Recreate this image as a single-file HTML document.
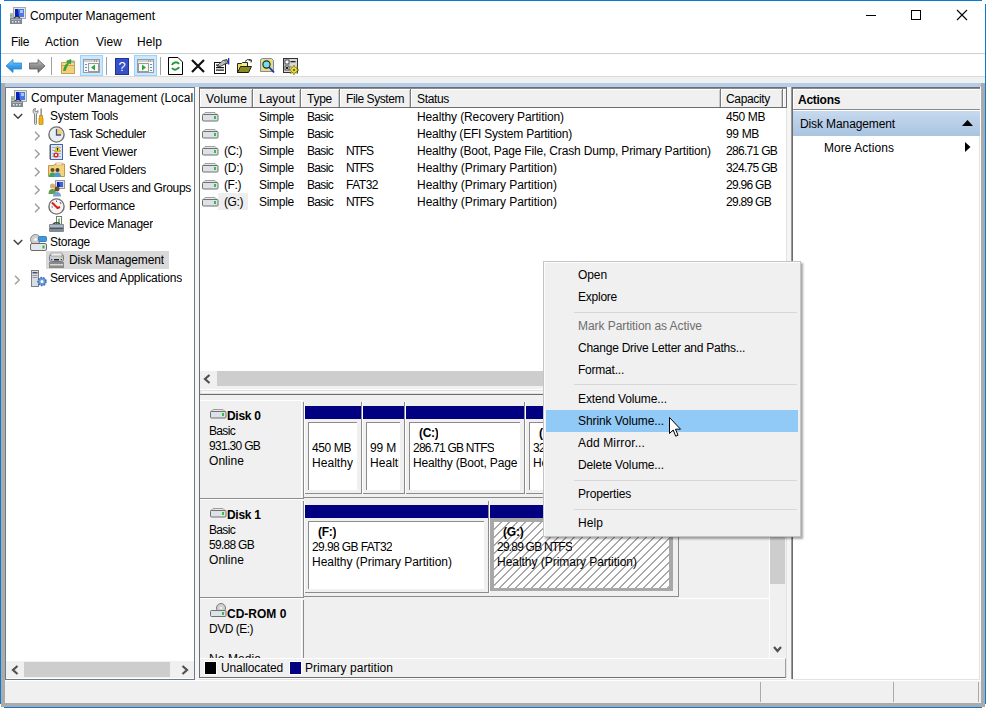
<!DOCTYPE html>
<html><head><meta charset="utf-8"><style>
html,body{margin:0;padding:0;width:986px;height:708px;overflow:hidden;background:#fff}
.a{position:absolute}
.t{position:absolute;font-family:"Liberation Sans",sans-serif;font-size:12px;line-height:16px;color:#000;white-space:nowrap}
.icon{width:16px;height:16px}
</style></head><body>
<div class="a" style="left:0px;top:0px;width:986px;height:708px;background:#fff"></div>
<div class="a" style="left:4px;top:0px;width:978px;height:1px;background:#0a78d5"></div>
<div class="a" style="left:0px;top:4px;width:1px;height:700px;background:#0a78d5"></div>
<div class="a" style="left:985px;top:4px;width:1px;height:700px;background:#0a78d5"></div>
<div class="a" style="left:4px;top:707px;width:978px;height:1px;background:#0a78d5"></div>
<div class="a" style="left:1px;top:83px;width:4px;height:624px;background:#ababab"></div>
<div class="a" style="left:981px;top:83px;width:4px;height:624px;background:#ababab"></div>
<div class="a" style="left:1px;top:703px;width:984px;height:4px;background:#ababab"></div>
<svg class="a" style="left:9px;top:7px" width="17" height="17" viewBox="0 0 17 17">
<rect x="4.5" y="0.5" width="12" height="11" fill="#e4e4e0" stroke="#a8a8a8"/>
<rect x="6" y="2" width="9" height="8" fill="#4a78e8"/><path d="M6 2H9L10 10H6Z" fill="#0a1fb8"/><rect x="11" y="3" width="3" height="3" fill="#a8c4f4"/>
<rect x="1" y="6" width="3" height="6" fill="#b8b8b8"/><rect x="1" y="8" width="2" height="1.5" fill="#5ad04a"/>
<path d="M5 11Q8 8.5 11 11" fill="none" stroke="#333" stroke-width="1.2"/>
<rect x="1" y="11" width="12" height="6" fill="#7c8894"/><rect x="2" y="12" width="10" height="1" fill="#aab4bd"/>
<rect x="3" y="14" width="1.5" height="1.5" fill="#e8e8e8"/><rect x="6" y="14" width="1.5" height="1.5" fill="#e8e8e8"/><rect x="9" y="14" width="1.5" height="1.5" fill="#e8e8e8"/>
</svg>
<div class="t" style="left:30px;top:8px;;letter-spacing:-0.06px;">Computer Management</div>
<div class="a" style="left:866px;top:15px;width:10px;height:1px;background:#000"></div>
<div class="a" style="left:911px;top:10px;width:10px;height:10px;border:1px solid #000;box-sizing:border-box"></div>
<svg class="a" style="left:956px;top:9px" width="12" height="12" viewBox="0 0 12 12"><path d="M1 1L11 11M11 1L1 11" stroke="#000" stroke-width="1.1"/></svg>
<div class="t" style="left:11px;top:34px;;letter-spacing:-0.34px;">File</div>
<div class="t" style="left:45px;top:34px;;letter-spacing:0.11px;">Action</div>
<div class="t" style="left:96px;top:34px;;letter-spacing:0.05px;">View</div>
<div class="t" style="left:137px;top:34px;;letter-spacing:0.08px;">Help</div>
<div class="a" style="left:1px;top:53px;width:984px;height:1px;background:#cfcfcf"></div>
<div class="a" style="left:1px;top:54px;width:984px;height:22px;background:#fff"></div>
<svg class="a" style="left:5px;top:58px" width="18" height="16" viewBox="0 0 18 16">
<defs><linearGradient id="gb" x1="0" y1="0" x2="0" y2="1"><stop offset="0" stop-color="#8cd0ff"/><stop offset="0.5" stop-color="#3aa0ea"/><stop offset="1" stop-color="#1c78c8"/></linearGradient>
<linearGradient id="gg" x1="0" y1="0" x2="0" y2="1"><stop offset="0" stop-color="#c8c8c8"/><stop offset="0.5" stop-color="#8e8e8e"/><stop offset="1" stop-color="#6a6a6a"/></linearGradient></defs>
<path d="M1 8L8 1.5V5H16.5V11H8V14.5Z" fill="url(#gb)" stroke="#2a86d0" stroke-width="0.8" stroke-linejoin="round"/></svg>
<svg class="a" style="left:28px;top:58px" width="18" height="16" viewBox="0 0 18 16">
<path d="M17 8L10 1.5V5H1.5V11H10V14.5Z" fill="url(#gg)" stroke="#5a5a5a" stroke-width="0.8" stroke-linejoin="round"/></svg>
<div class="a" style="left:51px;top:57px;width:1px;height:18px;background:#a0a0a0"></div>
<svg class="a" style="left:60px;top:58px" width="17" height="17" viewBox="0 0 17 17">
<path d="M1.5 4.5H7.5L8.5 3H14.5V15.5H1.5Z" fill="#f5d88a" stroke="#c0a050" stroke-width="0.9"/>
<path d="M1.5 7.5H14.5V15.5H1.5Z" fill="#f2cf78" stroke="#c0a050" stroke-width="0.9"/>
<path d="M3.5 12.5C4 9 6 6 8 4.5L6.5 3L11 1.5L10.5 6L9.2 5C7.5 7 6 9.5 5.5 12.5Z" fill="#30b030" stroke="#1a7a1a" stroke-width="0.5"/>
<rect x="11" y="3.5" width="3" height="1" fill="#5aa0e0"/></svg>
<div class="a" style="left:80px;top:55px;width:23px;height:21px;background:#cce8ff;border:1px solid #99d1ff;box-sizing:border-box"></div>
<svg class="a" style="left:83px;top:59px" width="17" height="14" viewBox="0 0 17 14">
<rect x="0.5" y="0.5" width="16" height="13" fill="#f8f8f8" stroke="#9a9a9a"/><rect x="1" y="1" width="15" height="2" fill="#d0d0d0"/><rect x="11" y="1.5" width="1" height="1" fill="#777"/><rect x="13" y="1.5" width="1" height="1" fill="#777"/>
<rect x="2" y="5" width="2" height="1" fill="#5a8fd0"/><rect x="2" y="8" width="2" height="1" fill="#5a8fd0"/><rect x="2" y="11" width="2" height="1" fill="#5a8fd0"/>
<rect x="5.5" y="4.5" width="10" height="8" fill="none" stroke="#9a9a9a"/><path d="M8 8.5L12 5.5V11.5Z" fill="#2fa63a"/></svg>
<div class="a" style="left:106px;top:57px;width:1px;height:18px;background:#a0a0a0"></div>
<svg class="a" style="left:115px;top:58px" width="14" height="17" viewBox="0 0 14 17">
<rect x="0.5" y="0.5" width="13" height="16" fill="#3651c7" stroke="#23338a"/><text x="7" y="13" font-family="Liberation Sans" font-size="13" fill="#fff" text-anchor="middle">?</text></svg>
<div class="a" style="left:134px;top:55px;width:23px;height:21px;background:#cce8ff;border:1px solid #99d1ff;box-sizing:border-box"></div>
<svg class="a" style="left:137px;top:59px" width="17" height="14" viewBox="0 0 17 14">
<rect x="0.5" y="0.5" width="16" height="13" fill="#f8f8f8" stroke="#9a9a9a"/><rect x="1" y="1" width="15" height="2" fill="#d0d0d0"/><rect x="11" y="1.5" width="1" height="1" fill="#777"/><rect x="13" y="1.5" width="1" height="1" fill="#777"/>
<rect x="13" y="5" width="2" height="1" fill="#5a8fd0"/><rect x="13" y="8" width="2" height="1" fill="#5a8fd0"/><rect x="13" y="11" width="2" height="1" fill="#5a8fd0"/>
<rect x="1.5" y="4.5" width="10" height="8" fill="none" stroke="#9a9a9a"/><path d="M9 8.5L5 5.5V11.5Z" fill="#2fa63a"/></svg>
<div class="a" style="left:160px;top:57px;width:1px;height:18px;background:#a0a0a0"></div>
<svg class="a" style="left:168px;top:57px" width="15" height="18" viewBox="0 0 15 18">
<path d="M0.5 0.5H10L14.5 5V17.5H0.5Z" fill="#fff" stroke="#000"/>
<path d="M4 8A4 4 0 0 1 11 7M11 10A4 4 0 0 1 4 11" fill="none" stroke="#1f9a2e" stroke-width="2"/></svg>
<svg class="a" style="left:190px;top:58px" width="16" height="16" viewBox="0 0 16 16"><path d="M2 2L14 14M14 2L2 14" stroke="#111" stroke-width="2.2"/></svg>
<svg class="a" style="left:213px;top:57px" width="17" height="17" viewBox="0 0 17 17">
<rect x="1.5" y="5.5" width="11" height="11" fill="#fff" stroke="#111"/>
<rect x="3" y="10" width="8" height="1.2" fill="#111"/><rect x="3" y="12.5" width="8" height="1.2" fill="#111"/><rect x="3" y="7.5" width="3" height="1.2" fill="#111"/>
<path d="M4 9L10 3.5L14 2.5L15 6L11 7.5L7 9.5Z" fill="#9a9a9a" stroke="#222" stroke-width="0.8"/>
<path d="M6 8L11 4M7.5 8.5L12 5" stroke="#eee" stroke-width="0.7"/>
<rect x="15" y="1" width="1.3" height="6.5" fill="#1a2fd0"/></svg>
<svg class="a" style="left:236px;top:57px" width="17" height="17" viewBox="0 0 17 17">
<path d="M1.5 6.5H5.5L6.5 5.5H11.5V15.5H1.5Z" fill="#f2f08a" stroke="#111" stroke-width="0.9"/>
<path d="M2 8H6M2 10H4" stroke="#d8d040" stroke-width="1"/>
<path d="M1.5 15.5L4.5 9.5H15.5L12.5 15.5Z" fill="#8e8a22" stroke="#111" stroke-width="0.9"/>
<path d="M9 4.5Q11.5 1 14.5 3.5" fill="none" stroke="#222" stroke-width="1"/><path d="M13 2.5L15.5 3L15 5.5" fill="none" stroke="#222" stroke-width="1"/></svg>
<svg class="a" style="left:259px;top:57px" width="17" height="18" viewBox="0 0 17 18">
<path d="M1.5 3.5Q1.5 1.5 3.5 1.5H12.5L14.5 3.5V14.5H1.5Z" fill="#d8d8b0" stroke="#8a8a8a"/>
<rect x="3" y="3" width="10" height="10" fill="#e8e070"/>
<circle cx="7.5" cy="7.5" r="3.6" fill="#70e0f0" stroke="#222" stroke-width="1.1"/>
<path d="M10 10L15 15.5" stroke="#1a2fc0" stroke-width="1.8"/></svg>
<svg class="a" style="left:282px;top:57px" width="18" height="18" viewBox="0 0 18 18">
<rect x="1.5" y="1.5" width="14" height="14" fill="#d8d8d8" stroke="#333"/>
<rect x="3" y="3" width="4" height="4" fill="#fff" stroke="#222" stroke-width="0.8"/><rect x="8.5" y="4" width="5" height="1.3" fill="#222"/>
<rect x="3" y="9" width="4" height="4" fill="#fff" stroke="#222" stroke-width="0.8"/><rect x="4" y="10" width="2" height="2" fill="#222"/>
<path d="M12 8L13 10.5L15.5 9.5L14.5 12L17 13L14.5 14L15.5 16.5L13 15.5L12 18L11 15.5L8.5 16.5L9.5 14L7 13L9.5 12L8.5 9.5L11 10.5Z" fill="#f2ea2a" stroke="#6a6a00" stroke-width="0.6"/>
<circle cx="12" cy="13" r="1.3" fill="#666"/></svg>
<div class="a" style="left:1px;top:76px;width:984px;height:1px;background:#dadada"></div>
<div class="a" style="left:1px;top:77px;width:984px;height:6px;background:#f0f0f0"></div>
<div class="a" style="left:5px;top:83px;width:976px;height:4px;background:#b5cde6"></div>
<div class="a" style="left:5px;top:87px;width:190px;height:593px;background:#fff;border:1px solid #6f7a89;box-sizing:border-box"></div>
<div class="a" style="left:195px;top:87px;width:4px;height:593px;background:#f5f5f5"></div>
<div class="a" style="left:46px;top:251px;width:123px;height:18px;background:#d9d9d9"></div>
<div class="t" style="left:31px;top:90px;white-space:nowrap;overflow:hidden;max-width:162px;letter-spacing:0px;">Computer Management (Local)</div>
<svg class="a" style="left:10px;top:90px" width="17" height="17" viewBox="0 0 17 17">
<rect x="4.5" y="0.5" width="12" height="11" fill="#e4e4e0" stroke="#a8a8a8"/>
<rect x="6" y="2" width="9" height="8" fill="#4a78e8"/><path d="M6 2H9L10 10H6Z" fill="#0a1fb8"/><rect x="11" y="3" width="3" height="3" fill="#a8c4f4"/>
<rect x="1" y="6" width="3" height="6" fill="#b8b8b8"/><rect x="1" y="8" width="2" height="1.5" fill="#5ad04a"/>
<path d="M5 11Q8 8.5 11 11" fill="none" stroke="#333" stroke-width="1.2"/>
<rect x="1" y="11" width="12" height="6" fill="#7c8894"/><rect x="2" y="12" width="10" height="1" fill="#aab4bd"/>
<rect x="3" y="14" width="1.5" height="1.5" fill="#e8e8e8"/><rect x="6" y="14" width="1.5" height="1.5" fill="#e8e8e8"/><rect x="9" y="14" width="1.5" height="1.5" fill="#e8e8e8"/>
</svg>
<div class="t" style="left:50px;top:108px;white-space:nowrap;overflow:hidden;max-width:143px;letter-spacing:-0.26px;">System Tools</div>
<svg class="a" style="left:13px;top:113px" width="10" height="7" viewBox="0 0 10 7"><path d="M0.8 1L5 5.2L9.2 1" fill="none" stroke="#404040" stroke-width="1.5"/></svg>
<svg class="a" style="left:31px;top:108px" width="16" height="17" viewBox="0 0 16 17">
<path d="M2 3Q2 0.5 4.5 0.5L3.8 3L5 4L7 2.5Q7.5 5 5.5 6L5.5 15.5Q5.5 16.5 4.5 16.5Q3.5 16.5 3.5 15.5L3.5 6Q2 5 2 3Z" fill="#dcdcdc" stroke="#7a7a7a" stroke-width="0.9"/>
<rect x="9.6" y="0.5" width="1" height="7" fill="#555"/>
<path d="M8.5 7.5H11.5V9.5L12 10V16Q12 16.8 11 16.8H9Q8 16.8 8 16V10L8.5 9.5Z" fill="#f2b211" stroke="#b07a00" stroke-width="0.7"/>
</svg>
<div class="t" style="left:69px;top:126px;white-space:nowrap;overflow:hidden;max-width:124px;letter-spacing:-0.36px;">Task Scheduler</div>
<svg class="a" style="left:34px;top:131px" width="7" height="10" viewBox="0 0 7 10"><path d="M1 0.8L5.2 5L1 9.2" fill="none" stroke="#a0a0a0" stroke-width="1.5"/></svg>
<svg class="a" style="left:48px;top:126px" width="17" height="17" viewBox="0 0 17 17">
<circle cx="8.5" cy="8.5" r="7.6" fill="#e9eef4" stroke="#707070" stroke-width="1.4"/>
<path d="M8.5 2.2A6.3 6.3 0 0 1 14.8 8.5H8.5Z" fill="#f5cf78"/>
<path d="M8.5 3V9H13" fill="none" stroke="#3a5680" stroke-width="1.3"/>
</svg>
<div class="t" style="left:69px;top:144px;white-space:nowrap;overflow:hidden;max-width:124px;letter-spacing:-0.21px;">Event Viewer</div>
<svg class="a" style="left:34px;top:149px" width="7" height="10" viewBox="0 0 7 10"><path d="M1 0.8L5.2 5L1 9.2" fill="none" stroke="#a0a0a0" stroke-width="1.5"/></svg>
<svg class="a" style="left:48px;top:144px" width="16" height="17" viewBox="0 0 16 17">
<rect x="2.5" y="0.5" width="12" height="15" fill="#dbe6f5" stroke="#4a62a8"/>
<rect x="4" y="3" width="9" height="1" fill="#9fb4d8"/><rect x="4" y="6" width="9" height="1" fill="#9fb4d8"/><rect x="4" y="9" width="9" height="1" fill="#9fb4d8"/><rect x="4" y="12" width="9" height="1" fill="#9fb4d8"/>
<path d="M1 2H3M1 4H3M1 6H3M1 8H3M1 10H3M1 12H3M1 14H3" stroke="#555" stroke-width="1"/>
<path d="M9.5 2L12.5 7.5H6.5Z" fill="#f2d21b" stroke="#b89a00" stroke-width="0.6"/><rect x="9.1" y="4" width="0.9" height="2.5" fill="#000"/>
<circle cx="8" cy="11" r="2.6" fill="#d92a2a"/><path d="M7 10L9 12M9 10L7 12" stroke="#fff" stroke-width="0.9"/>
</svg>
<div class="t" style="left:69px;top:162px;white-space:nowrap;overflow:hidden;max-width:124px;letter-spacing:-0.36px;">Shared Folders</div>
<svg class="a" style="left:34px;top:167px" width="7" height="10" viewBox="0 0 7 10"><path d="M1 0.8L5.2 5L1 9.2" fill="none" stroke="#a0a0a0" stroke-width="1.5"/></svg>
<svg class="a" style="left:48px;top:162px" width="17" height="16" viewBox="0 0 17 16">
<path d="M0.5 3.5H6L7 2H16.5V14.5H0.5Z" fill="#f5d27e" stroke="#c09a48"/>
<rect x="8" y="1" width="6" height="2" fill="#fff" stroke="#c09a48" stroke-width="0.6"/>
<circle cx="4.5" cy="8" r="2" fill="#6b4a2a"/><path d="M1 15Q1 10.5 4.5 10.5Q8 10.5 8 15Z" fill="#3aa36a"/>
<circle cx="9.5" cy="8" r="2" fill="#4a3a2a"/><path d="M6 15Q6 10.5 9.5 10.5Q13 10.5 13 15Z" fill="#4f9ad6"/>
</svg>
<div class="t" style="left:69px;top:180px;white-space:nowrap;overflow:hidden;max-width:124px;letter-spacing:-0.34px;">Local Users and Groups</div>
<svg class="a" style="left:34px;top:185px" width="7" height="10" viewBox="0 0 7 10"><path d="M1 0.8L5.2 5L1 9.2" fill="none" stroke="#a0a0a0" stroke-width="1.5"/></svg>
<svg class="a" style="left:48px;top:180px" width="17" height="17" viewBox="0 0 17 17">
<rect x="7.5" y="0.5" width="9" height="8" fill="#dcdcdc" stroke="#999"/><rect x="9" y="2" width="6" height="5" fill="#3a62d8"/><path d="M9 2H11L12 7H9Z" fill="#0a1fb8"/>
<circle cx="4.5" cy="6" r="2.6" fill="#d9b070"/><path d="M0.5 14Q0.5 9 4.5 9Q8 9 8 14Z" fill="#5aa04a"/>
<circle cx="9" cy="9" r="2.5" fill="#6b4a2a"/><path d="M5 16.5Q5 12 9 12Q13 12 13 16.5Z" fill="#7aa2d0"/>
</svg>
<div class="t" style="left:69px;top:198px;white-space:nowrap;overflow:hidden;max-width:124px;letter-spacing:-0.24px;">Performance</div>
<svg class="a" style="left:34px;top:203px" width="7" height="10" viewBox="0 0 7 10"><path d="M1 0.8L5.2 5L1 9.2" fill="none" stroke="#a0a0a0" stroke-width="1.5"/></svg>
<svg class="a" style="left:48px;top:198px" width="17" height="17" viewBox="0 0 17 17">
<circle cx="8.5" cy="8.5" r="7.6" fill="#f4f4f4" stroke="#707070" stroke-width="1.4"/>
<path d="M4 4.5L9.5 10L12 9" fill="none" stroke="#e01b1b" stroke-width="2"/>
<path d="M12 4L13 6M3.5 9H5M8.5 2.5V4" stroke="#666" stroke-width="1"/>
</svg>
<div class="t" style="left:69px;top:216px;white-space:nowrap;overflow:hidden;max-width:124px;letter-spacing:-0.24px;">Device Manager</div>
<svg class="a" style="left:48px;top:216px" width="17" height="17" viewBox="0 0 17 17">
<rect x="8.5" y="0.5" width="5" height="8" fill="#fff" stroke="#777"/><path d="M11 2.5V7" stroke="#3cb43c" stroke-width="1.5"/>
<path d="M5 8Q8.5 5.5 12 8" fill="none" stroke="#444" stroke-width="1.4"/>
<rect x="1" y="8" width="15" height="8" rx="1" fill="#7f8a95"/><rect x="2" y="9" width="13" height="2" fill="#aeb8c1"/><rect x="2" y="12" width="13" height="1" fill="#4c5660"/>
</svg>
<div class="t" style="left:50px;top:234px;white-space:nowrap;overflow:hidden;max-width:143px;letter-spacing:-0.29px;">Storage</div>
<svg class="a" style="left:13px;top:239px" width="10" height="7" viewBox="0 0 10 7"><path d="M0.8 1L5 5.2L9.2 1" fill="none" stroke="#404040" stroke-width="1.5"/></svg>
<svg class="a" style="left:30px;top:234px" width="17" height="17" viewBox="0 0 17 17">
<circle cx="5.5" cy="5.5" r="5" fill="#cfcfcf" stroke="#8a8a8a"/><circle cx="5.5" cy="5.5" r="1.3" fill="#fff"/>
<rect x="8.5" y="2.5" width="8" height="5" rx="1" fill="#3f97df" stroke="#2a6db0" stroke-width="0.8"/>
<rect x="0.5" y="9.5" width="16" height="7" rx="1.5" fill="#e3e6ec" stroke="#6a6a6a"/><rect x="12.5" y="11.5" width="2" height="3" fill="#33b23a"/>
</svg>
<div class="t" style="left:69px;top:252px;white-space:nowrap;overflow:hidden;max-width:124px;letter-spacing:-0.11px;">Disk Management</div>
<svg class="a" style="left:48px;top:252px" width="17" height="17" viewBox="0 0 17 17">
<rect x="1.5" y="2.5" width="14" height="7" rx="2" fill="#cfcfcf" stroke="#777"/><rect x="3" y="1" width="11" height="3" fill="#eee" stroke="#888" stroke-width="0.6"/>
<rect x="6" y="7" width="5" height="1.5" fill="#222"/><rect x="3" y="7" width="1.3" height="1.3" fill="#1a3fd0"/><rect x="12.7" y="7" width="1.3" height="1.3" fill="#1a3fd0"/><rect x="13" y="4" width="1.5" height="1.5" fill="#7ac23a"/>
<rect x="1" y="10" width="15" height="6" fill="#8a8a8a"/><rect x="2" y="12" width="13" height="1.5" fill="#d8d8d8"/>
</svg>
<div class="t" style="left:50px;top:270px;white-space:nowrap;overflow:hidden;max-width:143px;letter-spacing:-0.19px;">Services and Applications</div>
<svg class="a" style="left:14px;top:275px" width="7" height="10" viewBox="0 0 7 10"><path d="M1 0.8L5.2 5L1 9.2" fill="none" stroke="#a0a0a0" stroke-width="1.5"/></svg>
<svg class="a" style="left:30px;top:270px" width="17" height="17" viewBox="0 0 17 17">
<rect x="1.5" y="0.5" width="7" height="16" fill="#d8dde3" stroke="#7a8088"/><rect x="2.5" y="2" width="5" height="1.5" fill="#4a4f7a"/><rect x="2.5" y="5" width="5" height="1" fill="#999"/><rect x="2.5" y="7" width="5" height="1" fill="#999"/>
<circle cx="12" cy="11.5" r="4" fill="#6a9ad8" stroke="#3a6ab0" stroke-width="1.6" stroke-dasharray="1.6 1.2"/><circle cx="12" cy="11.5" r="1.5" fill="#fff"/>
</svg>
<div class="a" style="left:6px;top:661px;width:188px;height:17px;background:#f0f0f0"></div>
<div class="a" style="left:24px;top:662px;width:146px;height:15px;background:#cdcdcd"></div>
<svg class="a" style="left:11px;top:665px" width="8" height="10" viewBox="0 0 8 10"><path d="M6.5 1L2 5L6.5 9" fill="none" stroke="#505050" stroke-width="2.2"/></svg>
<svg class="a" style="left:181px;top:665px" width="8" height="10" viewBox="0 0 8 10"><path d="M1.5 1L6 5L1.5 9" fill="none" stroke="#505050" stroke-width="2.2"/></svg>
<div class="a" style="left:199px;top:87px;width:588px;height:593px;background:#fff"></div>
<div class="a" style="left:199px;top:87px;width:1px;height:592px;background:#6d6d6d"></div>
<div class="a" style="left:199px;top:87px;width:588px;height:1px;background:#6d6d6d"></div>
<div class="a" style="left:786px;top:89px;width:1px;height:590px;background:#e3e3e3"></div>
<div class="a" style="left:199px;top:678px;width:588px;height:1px;background:#fff"></div>
<div class="a" style="left:199px;top:679px;width:588px;height:1px;background:#e3e3e3"></div>
<div class="a" style="left:200px;top:88px;width:586px;height:1px;background:#8a8a8a"></div>
<div class="a" style="left:200px;top:89px;width:586px;height:18px;background:#f0f0f0;border-top:1px solid #fff;border-left:1px solid #fff;box-sizing:border-box"></div>
<div class="a" style="left:200px;top:107px;width:586px;height:1px;background:#6d6d6d"></div>
<div class="a" style="left:251px;top:90px;width:1px;height:17px;background:#c8c8c8"></div>
<div class="a" style="left:252px;top:89px;width:1px;height:18px;background:#7a7a7a"></div>
<div class="a" style="left:253px;top:89px;width:1px;height:18px;background:#fff"></div>
<div class="a" style="left:299px;top:90px;width:1px;height:17px;background:#c8c8c8"></div>
<div class="a" style="left:300px;top:89px;width:1px;height:18px;background:#7a7a7a"></div>
<div class="a" style="left:301px;top:89px;width:1px;height:18px;background:#fff"></div>
<div class="a" style="left:338px;top:90px;width:1px;height:17px;background:#c8c8c8"></div>
<div class="a" style="left:339px;top:89px;width:1px;height:18px;background:#7a7a7a"></div>
<div class="a" style="left:340px;top:89px;width:1px;height:18px;background:#fff"></div>
<div class="a" style="left:409px;top:90px;width:1px;height:17px;background:#c8c8c8"></div>
<div class="a" style="left:410px;top:89px;width:1px;height:18px;background:#7a7a7a"></div>
<div class="a" style="left:411px;top:89px;width:1px;height:18px;background:#fff"></div>
<div class="a" style="left:719px;top:90px;width:1px;height:17px;background:#c8c8c8"></div>
<div class="a" style="left:720px;top:89px;width:1px;height:18px;background:#7a7a7a"></div>
<div class="a" style="left:721px;top:89px;width:1px;height:18px;background:#fff"></div>
<div class="a" style="left:781px;top:90px;width:1px;height:17px;background:#c8c8c8"></div>
<div class="a" style="left:782px;top:89px;width:1px;height:18px;background:#7a7a7a"></div>
<div class="a" style="left:783px;top:89px;width:1px;height:18px;background:#fff"></div>
<div class="a" style="left:786px;top:87px;width:1px;height:21px;background:#6d6d6d"></div>
<div class="a" style="left:218px;top:193px;width:30px;height:17px;background:#eeeeee"></div>
<div class="t" style="left:206px;top:91px;;letter-spacing:0.16px;">Volume</div>
<div class="t" style="left:259px;top:91px;">Layout</div>
<div class="t" style="left:307px;top:91px;;letter-spacing:-0.25px;">Type</div>
<div class="t" style="left:346px;top:91px;;letter-spacing:-0.42px;">File System</div>
<div class="t" style="left:417px;top:91px;;letter-spacing:-0.33px;">Status</div>
<div class="t" style="left:726px;top:91px;;letter-spacing:-0.34px;">Capacity</div>
<svg class="a" style="left:202px;top:111px" width="17" height="11" viewBox="0 0 17 11"><path d="M3 1.5H13L15.5 4H0.5Z" fill="#e6e6e6" stroke="#8a8a8a" stroke-width="0.8"/><rect x="0.5" y="3.5" width="15.5" height="6.5" rx="1" fill="#dde1e8" stroke="#707070"/><rect x="12" y="5" width="2" height="3" fill="#2fc23a"/></svg>
<div class="t" style="left:259px;top:109px;;letter-spacing:-0.28px;">Simple</div>
<div class="t" style="left:307px;top:109px;;letter-spacing:-0.67px;">Basic</div>
<div class="t" style="left:346px;top:109px;"></div>
<div class="t" style="left:417px;top:109px;;letter-spacing:-0.11px;">Healthy (Recovery Partition)</div>
<div class="t" style="left:726px;top:109px;;letter-spacing:-0.39px;">450 MB</div>
<svg class="a" style="left:202px;top:128px" width="17" height="11" viewBox="0 0 17 11"><path d="M3 1.5H13L15.5 4H0.5Z" fill="#e6e6e6" stroke="#8a8a8a" stroke-width="0.8"/><rect x="0.5" y="3.5" width="15.5" height="6.5" rx="1" fill="#dde1e8" stroke="#707070"/><rect x="12" y="5" width="2" height="3" fill="#2fc23a"/></svg>
<div class="t" style="left:259px;top:126px;;letter-spacing:-0.28px;">Simple</div>
<div class="t" style="left:307px;top:126px;;letter-spacing:-0.67px;">Basic</div>
<div class="t" style="left:346px;top:126px;"></div>
<div class="t" style="left:417px;top:126px;;letter-spacing:-0.21px;">Healthy (EFI System Partition)</div>
<div class="t" style="left:726px;top:126px;;letter-spacing:-0.33px;">99 MB</div>
<svg class="a" style="left:202px;top:145px" width="17" height="11" viewBox="0 0 17 11"><path d="M3 1.5H13L15.5 4H0.5Z" fill="#e6e6e6" stroke="#8a8a8a" stroke-width="0.8"/><rect x="0.5" y="3.5" width="15.5" height="6.5" rx="1" fill="#dde1e8" stroke="#707070"/><rect x="12" y="5" width="2" height="3" fill="#2fc23a"/></svg>
<div class="t" style="left:224px;top:143px;;letter-spacing:-0.50px;">(C:)</div>
<div class="t" style="left:259px;top:143px;;letter-spacing:-0.28px;">Simple</div>
<div class="t" style="left:307px;top:143px;;letter-spacing:-0.67px;">Basic</div>
<div class="t" style="left:346px;top:143px;;letter-spacing:-1.08px;">NTFS</div>
<div class="t" style="left:417px;top:143px;;letter-spacing:-0.17px;">Healthy (Boot, Page File, Crash Dump, Primary Partition)</div>
<div class="t" style="left:726px;top:143px;;letter-spacing:-0.70px;">286.71 GB</div>
<svg class="a" style="left:202px;top:162px" width="17" height="11" viewBox="0 0 17 11"><path d="M3 1.5H13L15.5 4H0.5Z" fill="#e6e6e6" stroke="#8a8a8a" stroke-width="0.8"/><rect x="0.5" y="3.5" width="15.5" height="6.5" rx="1" fill="#dde1e8" stroke="#707070"/><rect x="12" y="5" width="2" height="3" fill="#2fc23a"/></svg>
<div class="t" style="left:224px;top:160px;;letter-spacing:-0.25px;">(D:)</div>
<div class="t" style="left:259px;top:160px;;letter-spacing:-0.28px;">Simple</div>
<div class="t" style="left:307px;top:160px;;letter-spacing:-0.67px;">Basic</div>
<div class="t" style="left:346px;top:160px;;letter-spacing:-1.08px;">NTFS</div>
<div class="t" style="left:417px;top:160px;;letter-spacing:-0.03px;">Healthy (Primary Partition)</div>
<div class="t" style="left:726px;top:160px;;letter-spacing:-0.70px;">324.75 GB</div>
<svg class="a" style="left:202px;top:179px" width="17" height="11" viewBox="0 0 17 11"><path d="M3 1.5H13L15.5 4H0.5Z" fill="#e6e6e6" stroke="#8a8a8a" stroke-width="0.8"/><rect x="0.5" y="3.5" width="15.5" height="6.5" rx="1" fill="#dde1e8" stroke="#707070"/><rect x="12" y="5" width="2" height="3" fill="#2fc23a"/></svg>
<div class="t" style="left:224px;top:177px;;letter-spacing:-0.41px;">(F:)</div>
<div class="t" style="left:259px;top:177px;;letter-spacing:-0.28px;">Simple</div>
<div class="t" style="left:307px;top:177px;;letter-spacing:-0.67px;">Basic</div>
<div class="t" style="left:346px;top:177px;;letter-spacing:-0.49px;">FAT32</div>
<div class="t" style="left:417px;top:177px;;letter-spacing:-0.03px;">Healthy (Primary Partition)</div>
<div class="t" style="left:726px;top:177px;;letter-spacing:-0.71px;">29.96 GB</div>
<svg class="a" style="left:202px;top:196px" width="17" height="11" viewBox="0 0 17 11"><path d="M3 1.5H13L15.5 4H0.5Z" fill="#e6e6e6" stroke="#8a8a8a" stroke-width="0.8"/><rect x="0.5" y="3.5" width="15.5" height="6.5" rx="1" fill="#dde1e8" stroke="#707070"/><rect x="12" y="5" width="2" height="3" fill="#2fc23a"/></svg>
<div class="t" style="left:224px;top:194px;;letter-spacing:-0.41px;">(G:)</div>
<div class="t" style="left:259px;top:194px;;letter-spacing:-0.28px;">Simple</div>
<div class="t" style="left:307px;top:194px;;letter-spacing:-0.67px;">Basic</div>
<div class="t" style="left:346px;top:194px;;letter-spacing:-1.08px;">NTFS</div>
<div class="t" style="left:417px;top:194px;;letter-spacing:-0.03px;">Healthy (Primary Partition)</div>
<div class="t" style="left:726px;top:194px;;letter-spacing:-0.71px;">29.89 GB</div>
<div class="a" style="left:200px;top:371px;width:586px;height:18px;background:#f0f0f0"></div>
<div class="a" style="left:217px;top:371px;width:569px;height:15px;background:#cdcdcd"></div>
<svg class="a" style="left:203px;top:374px" width="8" height="10" viewBox="0 0 8 10"><path d="M6.5 1L2 5L6.5 9" fill="none" stroke="#505050" stroke-width="2.2"/></svg>
<div class="a" style="left:200px;top:390px;width:586px;height:4px;background:#f7f7f7;border:1px solid #e0e0e0;box-sizing:border-box"></div>
<div class="a" style="left:200px;top:394px;width:586px;height:1px;background:#6d6d6d"></div>
<div class="a" style="left:200px;top:395px;width:586px;height:264px;background:#f0f0f0"></div>
<div class="a" style="left:200px;top:400px;width:103px;height:99px;background:#f0f0f0;border-top:1px solid #fff;border-bottom:1px solid #8c8c8c;box-sizing:border-box"></div>
<div class="a" style="left:301px;top:401px;width:1px;height:97px;background:#fff"></div>
<div class="a" style="left:303px;top:402px;width:1px;height:97px;background:#8c8c8c"></div>
<svg class="a" style="left:210px;top:408px" width="17" height="11" viewBox="0 0 17 11"><path d="M3 1.5H13L15.5 4H0.5Z" fill="#e6e6e6" stroke="#8a8a8a" stroke-width="0.8"/><rect x="0.5" y="3.5" width="15.5" height="6.5" rx="1" fill="#dde1e8" stroke="#707070"/><rect x="12" y="5" width="2" height="3" fill="#2fc23a"/></svg>
<div class="t" style="left:227px;top:408px;font-weight:bold;letter-spacing:-0.31px;">Disk 0</div>
<div class="t" style="left:209px;top:423px;;letter-spacing:-0.67px;">Basic</div>
<div class="t" style="left:209px;top:438px;;letter-spacing:-0.70px;">931.30 GB</div>
<div class="t" style="left:209px;top:453px;;letter-spacing:0.05px;">Online</div>
<div class="a" style="left:200px;top:499px;width:103px;height:99px;background:#f0f0f0;border-top:1px solid #fff;border-bottom:1px solid #8c8c8c;box-sizing:border-box"></div>
<div class="a" style="left:301px;top:500px;width:1px;height:97px;background:#fff"></div>
<div class="a" style="left:303px;top:501px;width:1px;height:97px;background:#8c8c8c"></div>
<svg class="a" style="left:210px;top:507px" width="17" height="11" viewBox="0 0 17 11"><path d="M3 1.5H13L15.5 4H0.5Z" fill="#e6e6e6" stroke="#8a8a8a" stroke-width="0.8"/><rect x="0.5" y="3.5" width="15.5" height="6.5" rx="1" fill="#dde1e8" stroke="#707070"/><rect x="12" y="5" width="2" height="3" fill="#2fc23a"/></svg>
<div class="t" style="left:227px;top:507px;font-weight:bold;letter-spacing:-0.31px;">Disk 1</div>
<div class="t" style="left:209px;top:522px;;letter-spacing:-0.67px;">Basic</div>
<div class="t" style="left:209px;top:537px;;letter-spacing:-0.71px;">59.88 GB</div>
<div class="t" style="left:209px;top:552px;;letter-spacing:0.05px;">Online</div>
<div class="a" style="left:200px;top:598px;width:103px;height:61px;background:#f0f0f0;border-top:1px solid #fff;border-bottom:1px solid #8c8c8c;box-sizing:border-box"></div>
<div class="a" style="left:301px;top:599px;width:1px;height:59px;background:#fff"></div>
<div class="a" style="left:303px;top:600px;width:1px;height:59px;background:#8c8c8c"></div>
<svg class="a" style="left:210px;top:603px" width="17" height="14" viewBox="0 0 17 14"><circle cx="11" cy="5" r="4.5" fill="#d0d0d0" stroke="#7a7a7a"/><circle cx="11" cy="5" r="1" fill="#fff"/><rect x="0.5" y="7.5" width="15.5" height="6" rx="1" fill="#dde1e8" stroke="#707070"/><rect x="12" y="9" width="2" height="3" fill="#2fc23a"/></svg>
<div class="t" style="left:227px;top:606px;font-weight:bold">CD-ROM 0</div>
<div class="t" style="left:209px;top:621px;;letter-spacing:-0.50px;">DVD (E:)</div>
<div class="t" style="left:209px;top:636px;"></div>
<div class="t" style="left:209px;top:651px;;letter-spacing:0.08px;">No Media</div>
<div class="a" style="left:304px;top:497px;width:496px;height:1px;background:#8c8c8c"></div>
<div class="a" style="left:800px;top:402px;width:1px;height:96px;background:#8c8c8c"></div>
<div class="a" style="left:303px;top:402px;width:1px;height:92px;background:#8c8c8c"></div>
<div class="a" style="left:304px;top:402px;width:1px;height:92px;background:#fff"></div>
<div class="a" style="left:305px;top:406px;width:56px;height:13px;background:#000080"></div>
<div class="a" style="left:305px;top:493px;width:56px;height:1px;background:#8c8c8c"></div>
<div class="a" style="left:308px;top:422px;width:49px;height:68px;background:#fff;border-left:1px solid #8c8c8c;border-top:1px solid #8c8c8c;box-sizing:border-box"></div>
<div class="t" style="left:312px;top:440px;overflow:hidden;max-width:44px;letter-spacing:-0.39px;">450 MB</div>
<div class="t" style="left:312px;top:455px;overflow:hidden;max-width:44px;letter-spacing:0.04px;">Healthy</div>
<div class="a" style="left:361px;top:402px;width:1px;height:92px;background:#8c8c8c"></div>
<div class="a" style="left:362px;top:402px;width:1px;height:92px;background:#fff"></div>
<div class="a" style="left:363px;top:406px;width:41px;height:13px;background:#000080"></div>
<div class="a" style="left:363px;top:493px;width:41px;height:1px;background:#8c8c8c"></div>
<div class="a" style="left:366px;top:422px;width:34px;height:68px;background:#fff;border-left:1px solid #8c8c8c;border-top:1px solid #8c8c8c;box-sizing:border-box"></div>
<div class="t" style="left:370px;top:440px;overflow:hidden;max-width:29px;letter-spacing:-0.17px;">99 M</div>
<div class="t" style="left:370px;top:455px;overflow:hidden;max-width:29px;letter-spacing:0.04px;">Healthy</div>
<div class="a" style="left:404px;top:402px;width:1px;height:92px;background:#8c8c8c"></div>
<div class="a" style="left:405px;top:402px;width:1px;height:92px;background:#fff"></div>
<div class="a" style="left:406px;top:406px;width:118px;height:13px;background:#000080"></div>
<div class="a" style="left:406px;top:493px;width:118px;height:1px;background:#8c8c8c"></div>
<div class="a" style="left:409px;top:422px;width:111px;height:68px;background:#fff;border-left:1px solid #8c8c8c;border-top:1px solid #8c8c8c;box-sizing:border-box"></div>
<div class="t" style="left:419px;top:425px;overflow:hidden;max-width:100px;font-weight:bold;letter-spacing:-0.31px;">(C:)</div>
<div class="t" style="left:413px;top:440px;overflow:hidden;max-width:106px;letter-spacing:-0.79px;">286.71 GB NTFS</div>
<div class="t" style="left:413px;top:455px;overflow:hidden;max-width:106px;letter-spacing:-0.17px;">Healthy (Boot, Page File</div>
<div class="a" style="left:524px;top:402px;width:1px;height:92px;background:#8c8c8c"></div>
<div class="a" style="left:525px;top:402px;width:1px;height:92px;background:#fff"></div>
<div class="a" style="left:526px;top:406px;width:114px;height:13px;background:#000080"></div>
<div class="a" style="left:526px;top:493px;width:114px;height:1px;background:#8c8c8c"></div>
<div class="a" style="left:529px;top:422px;width:107px;height:68px;background:#fff;border-left:1px solid #8c8c8c;border-top:1px solid #8c8c8c;box-sizing:border-box"></div>
<div class="t" style="left:539px;top:425px;overflow:hidden;max-width:96px;font-weight:bold;letter-spacing:-0.04px;">(D:)</div>
<div class="t" style="left:533px;top:440px;overflow:hidden;max-width:102px;letter-spacing:-0.79px;">324.75 GB NTFS</div>
<div class="t" style="left:533px;top:455px;overflow:hidden;max-width:102px;letter-spacing:-0.08px;">Healthy (Primary</div>
<div class="a" style="left:304px;top:596px;width:374px;height:1px;background:#8c8c8c"></div>
<div class="a" style="left:678px;top:501px;width:1px;height:96px;background:#8c8c8c"></div>
<div class="a" style="left:303px;top:501px;width:1px;height:92px;background:#8c8c8c"></div>
<div class="a" style="left:304px;top:501px;width:1px;height:92px;background:#fff"></div>
<div class="a" style="left:305px;top:505px;width:183px;height:13px;background:#000080"></div>
<div class="a" style="left:305px;top:592px;width:183px;height:1px;background:#8c8c8c"></div>
<div class="a" style="left:308px;top:521px;width:176px;height:68px;background:#fff;border-left:1px solid #8c8c8c;border-top:1px solid #8c8c8c;box-sizing:border-box"></div>
<div class="t" style="left:318px;top:524px;overflow:hidden;max-width:165px;font-weight:bold;letter-spacing:-0.24px;">(F:)</div>
<div class="t" style="left:312px;top:539px;overflow:hidden;max-width:171px;letter-spacing:-0.60px;">29.98 GB FAT32</div>
<div class="t" style="left:312px;top:554px;overflow:hidden;max-width:171px;letter-spacing:-0.03px;">Healthy (Primary Partition)</div>
<div class="a" style="left:488px;top:501px;width:1px;height:92px;background:#8c8c8c"></div>
<div class="a" style="left:489px;top:501px;width:1px;height:92px;background:#fff"></div>
<div class="a" style="left:490px;top:505px;width:188px;height:13px;background:#000080"></div>
<div class="a" style="left:490px;top:518px;width:183px;height:73px;background:#a8a8a8"></div>
<div class="a" style="left:494px;top:522px;width:175px;height:66px;background:repeating-linear-gradient(135deg,#fff 0 4.76px,#a8a8a8 4.76px 5.66px);"></div>
<div class="t" style="left:503px;top:524px;overflow:hidden;max-width:170px;font-weight:bold;letter-spacing:-0.20px;">(G:)</div>
<div class="t" style="left:497px;top:539px;overflow:hidden;max-width:176px;letter-spacing:-0.79px;">29.89 GB NTFS</div>
<div class="t" style="left:497px;top:554px;overflow:hidden;max-width:176px;letter-spacing:-0.03px;">Healthy (Primary Partition)</div>
<div class="a" style="left:303px;top:600px;width:1px;height:58px;background:#8c8c8c"></div>
<div class="a" style="left:678px;top:598px;width:91px;height:1px;background:#fff"></div>
<div class="a" style="left:769px;top:395px;width:1px;height:263px;background:#fff"></div>
<div class="a" style="left:770px;top:395px;width:16px;height:263px;background:#f0f0f0"></div>
<div class="a" style="left:770px;top:537px;width:15px;height:47px;background:#cdcdcd"></div>
<svg class="a" style="left:773px;top:646px" width="9" height="7" viewBox="0 0 9 7"><path d="M1 1L4.5 5L8 1" fill="none" stroke="#505050" stroke-width="2.2"/></svg>
<div class="a" style="left:200px;top:658px;width:586px;height:20px;background:#f0f0f0;border-top:1px solid #fff;border-bottom:1px solid #6d6d6d;border-right:1px solid #a0a0a0;box-sizing:border-box"></div>
<div class="a" style="left:204px;top:661px;width:13px;height:14px;background:#fff"></div>
<div class="a" style="left:205px;top:662px;width:11px;height:12px;background:#000"></div>
<div class="a" style="left:289px;top:661px;width:13px;height:14px;background:#fff"></div>
<div class="t" style="left:221px;top:660px;;letter-spacing:-0.12px;">Unallocated</div>
<div class="a" style="left:290px;top:662px;width:11px;height:12px;background:#000080"></div>
<div class="t" style="left:305px;top:660px;;letter-spacing:0.04px;">Primary partition</div>
<div class="a" style="left:787px;top:87px;width:5px;height:593px;background:#f5f5f5"></div>
<div class="a" style="left:792px;top:87px;width:189px;height:593px;background:#fff"></div>
<div class="a" style="left:791px;top:87px;width:1px;height:592px;background:#9a9a9a"></div>
<div class="a" style="left:792px;top:87px;width:1px;height:592px;background:#6d6d6d"></div>
<div class="a" style="left:792px;top:87px;width:188px;height:1px;background:#6d6d6d"></div>
<div class="a" style="left:979px;top:88px;width:1px;height:591px;background:#e3e3e3"></div>
<div class="a" style="left:792px;top:679px;width:188px;height:1px;background:#e3e3e3"></div>
<div class="a" style="left:793px;top:88px;width:187px;height:1px;background:#8a8a8a"></div>
<div class="a" style="left:793px;top:89px;width:187px;height:20px;background:#f0f0f0;border-top:1px solid #fff;border-left:1px solid #fff;box-sizing:border-box"></div>
<div class="a" style="left:793px;top:109px;width:187px;height:1px;background:#8a8a8a"></div>
<div class="t" style="left:798px;top:92px;font-weight:bold;letter-spacing:-0.27px;">Actions</div>
<div class="a" style="left:793px;top:110px;width:187px;height:1px;background:#fff"></div>
<div class="a" style="left:793px;top:111px;width:187px;height:25px;background:linear-gradient(#c6d9ee,#a9c4e1)"></div>
<div class="t" style="left:800px;top:116px;;letter-spacing:-0.11px;">Disk Management</div>
<svg class="a" style="left:962px;top:120px" width="11" height="7" viewBox="0 0 11 7"><path d="M0 6L5.5 0L11 6Z" fill="#000"/></svg>
<div class="t" style="left:824px;top:140px;;letter-spacing:0.05px;">More Actions</div>
<svg class="a" style="left:965px;top:142px" width="6" height="10" viewBox="0 0 6 10"><path d="M0 0L5.5 5L0 10Z" fill="#000"/></svg>
<div class="a" style="left:5px;top:680px;width:976px;height:23px;background:#f0f0f0;border-top:1px solid #fff;box-sizing:border-box"></div>
<div class="a" style="left:760px;top:682px;width:1px;height:20px;background:#aaaaaa"></div>
<div class="a" style="left:893px;top:682px;width:1px;height:20px;background:#aaaaaa"></div>
<div class="a" style="left:978px;top:682px;width:1px;height:20px;background:#aaaaaa"></div>
<div class="a" style="left:543px;top:261px;width:258px;height:276px;background:#f0f0f0;border:1px solid #c4c4c4;box-sizing:border-box;box-shadow:2px 2px 2px rgba(0,0,0,0.35)"></div>
<div class="a" style="left:544px;top:262px;width:256px;height:1px;background:#fcfcfc"></div>
<div class="a" style="left:544px;top:262px;width:1px;height:274px;background:#fcfcfc"></div>
<div class="a" style="left:574px;top:312px;width:223px;height:1px;background:#d7d7d7"></div>
<div class="a" style="left:574px;top:384px;width:223px;height:1px;background:#d7d7d7"></div>
<div class="a" style="left:574px;top:480px;width:223px;height:1px;background:#d7d7d7"></div>
<div class="a" style="left:574px;top:509px;width:223px;height:1px;background:#d7d7d7"></div>
<div class="a" style="left:546px;top:410px;width:252px;height:22px;background:#91c9f7"></div>
<div class="t" style="left:578px;top:267px;;letter-spacing:-0.09px;">Open</div>
<div class="t" style="left:578px;top:289px;;letter-spacing:-0.24px;">Explore</div>
<div class="t" style="left:578px;top:318px;color:#6d6d6d;letter-spacing:-0.06px;">Mark Partition as Active</div>
<div class="t" style="left:578px;top:340px;;letter-spacing:-0.24px;">Change Drive Letter and Paths...</div>
<div class="t" style="left:578px;top:362px;;letter-spacing:-0.22px;">Format...</div>
<div class="t" style="left:578px;top:391px;;letter-spacing:-0.11px;">Extend Volume...</div>
<div class="t" style="left:578px;top:413px;;letter-spacing:-0.08px;">Shrink Volume...</div>
<div class="t" style="left:578px;top:435px;;letter-spacing:0.13px;">Add Mirror...</div>
<div class="t" style="left:578px;top:457px;;letter-spacing:-0.13px;">Delete Volume...</div>
<div class="t" style="left:578px;top:486px;;letter-spacing:-0.17px;">Properties</div>
<div class="t" style="left:578px;top:515px;;letter-spacing:0.08px;">Help</div>
<svg class="a" style="left:669px;top:417px" width="13" height="21" viewBox="0 0 13 21">
<path d="M0.5 0.5V16.5L4.2 13L6.7 19.2L9 18.2L6.5 12.2H11.5Z" fill="#fff" stroke="#000" stroke-width="1"/></svg>
</body></html>
